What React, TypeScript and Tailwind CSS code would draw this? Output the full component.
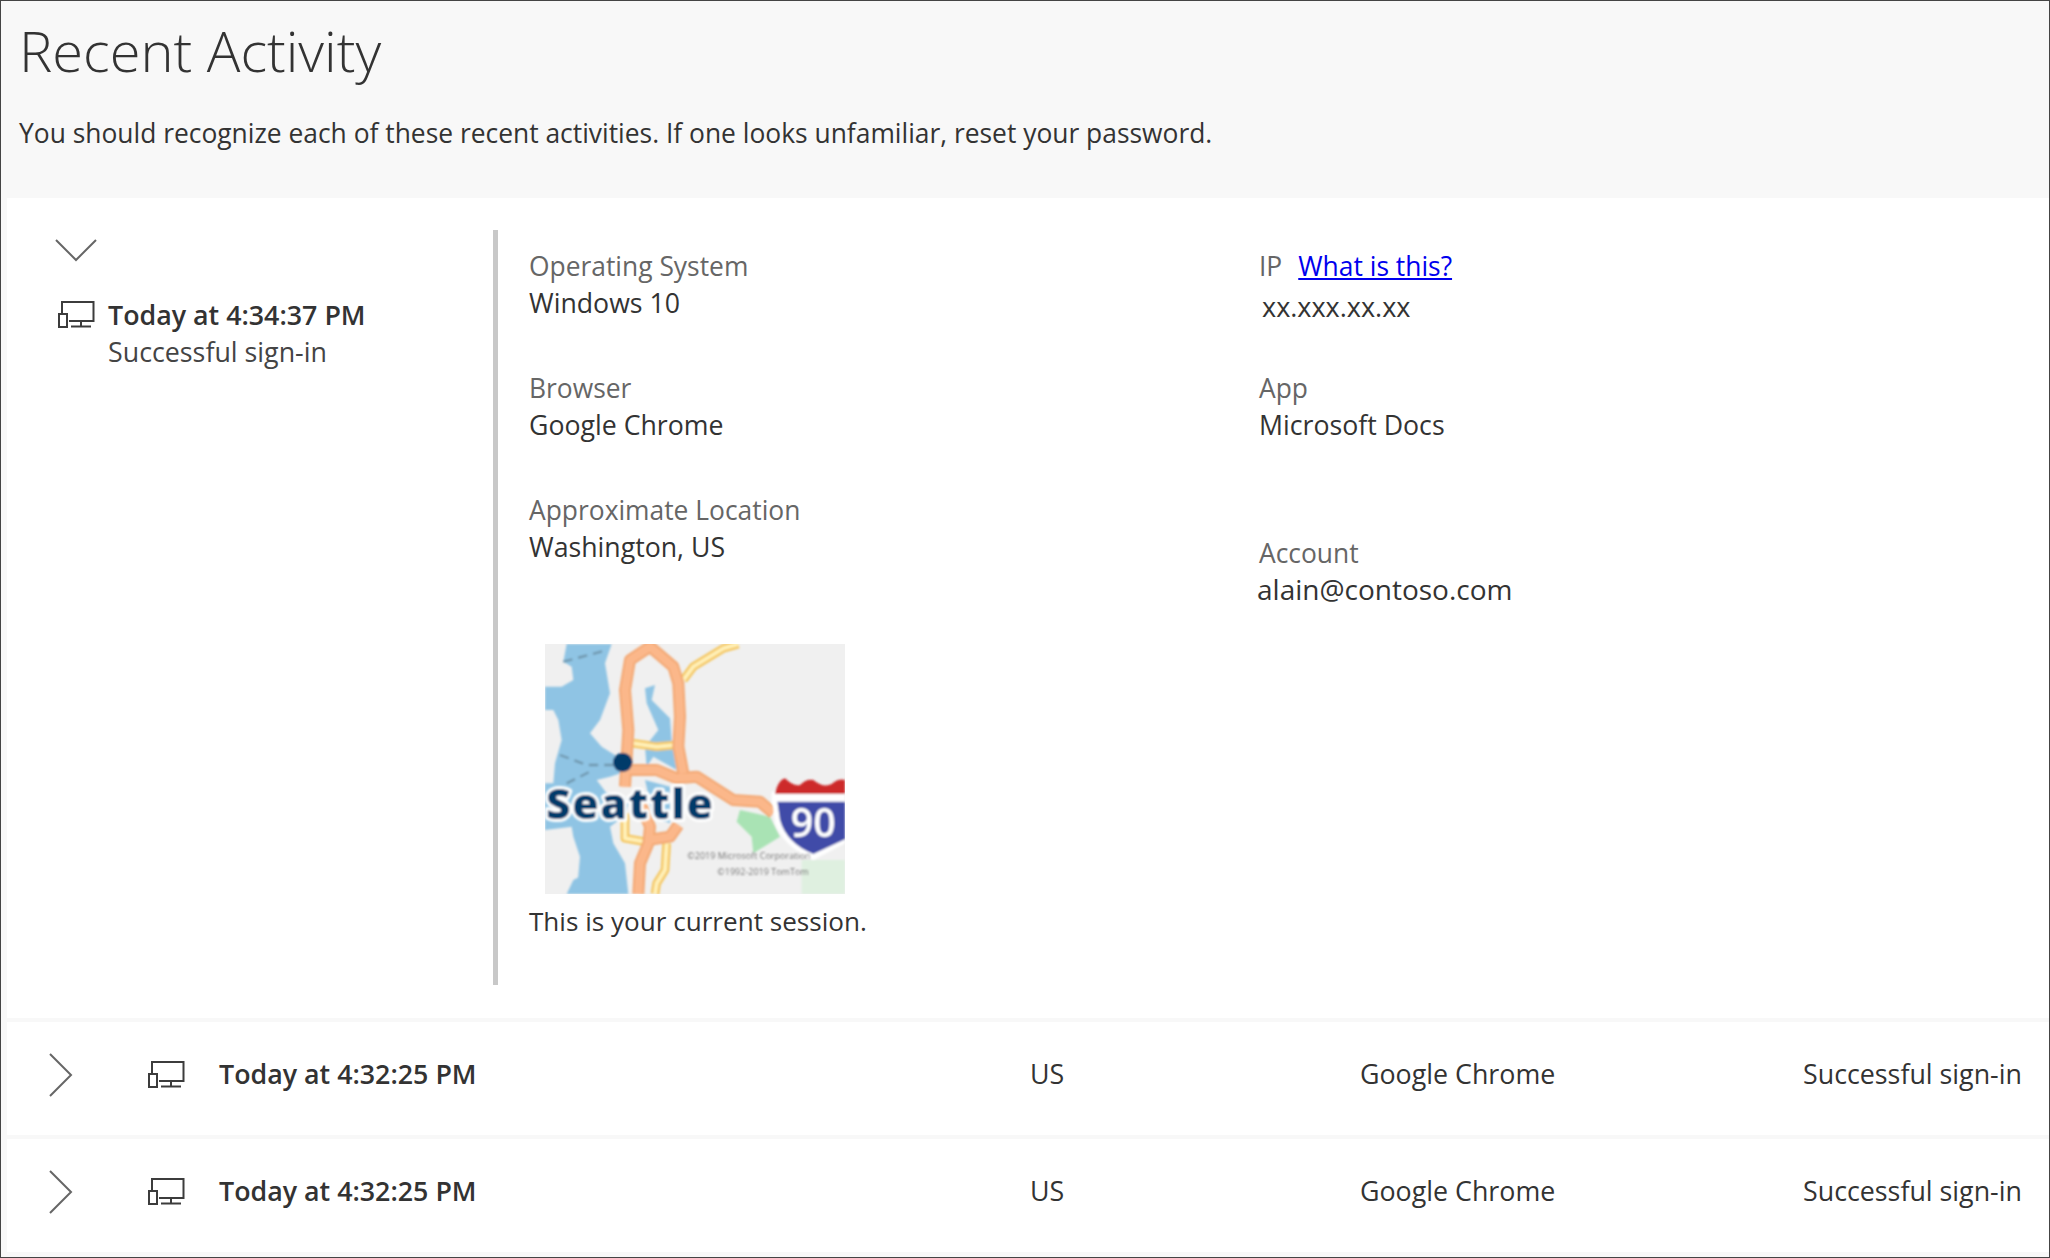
const font = "font-['Open_Sans','Noto_Sans',sans-serif]";

function DeviceIcon() {
  return (
    <svg width="37" height="27" viewBox="0 0 37 27" fill="none" stroke="#3c3c3c" strokeWidth="2" className="shrink-0">
      <path d="M4 14V1h31.500v19H11" />
      <rect x="1" y="13" width="8" height="13" />
      <path d="M23 20v5M13 25.500h20" />
    </svg>
  );
}

function Field({ label, value, className }: { label: string; value: string; className?: string }) {
  return (
    <div className={className}>
      <div className="h-[37px] leading-[37px] text-[#666]">{label}</div>
      <div className="h-[37px] leading-[35px] text-[26.7px] text-[#333]">{value}</div>
    </div>
  );
}

function SeattleMap() {
  return (
    <svg width="300" height="250" viewBox="45 42 900 750" className="block">
      <defs>
        <filter id="soft">
          <feGaussianBlur stdDeviation="2.5" />
        </filter>
      </defs>
      <rect x="45" y="42" width="900" height="750" fill="#f0f0f0" />
      <g filter="url(#soft)">
        <path d="M815 690H945V792H815Z" fill="#dff0e0" />
        <path d="M630 540L720 560L750 620L670 670L665 620L620 575Z" fill="#a9e3b4" />
        <path
          d="M110 42H245L225 100L240 190L210 270L180 310L215 350L270 385L285 425L240 440L200 450L230 490L300 510L280 560L240 590L250 640L285 700L295 792H140L150 680L130 620L125 590L45 600V460H70L75 400L95 330L85 270L70 240L45 240V170H95L130 150L125 110L100 95Z"
          fill="#8fc4e4"
        />
        <path d="M345 175L375 165L365 210L420 265L425 330L440 420L370 380L350 410L345 350L385 300L350 220Z" fill="#8fc4e4" />
        <path d="M345 450L420 470L420 580L370 560Z" fill="#8fc4e4" />
        <path d="M110 792L130 750L170 730L175 760L160 792Z" fill="#8fc4e4" />
        <path d="M100 95L225 62M90 375L170 405L250 405M110 460L190 420" stroke="#6f96ad" strokeWidth="7" strokeDasharray="28 18" fill="none" />
        <g fill="none" strokeLinejoin="round">
          <path d="M460 150L490 110L580 55L625 42M310 340L380 350L435 345M285 550L285 625L345 635M410 640L405 720L380 760L375 792" stroke="#f5c65c" strokeWidth="26" />
          <path d="M460 150L490 110L580 55L625 42M310 340L380 350L435 345M285 550L285 625L345 635M410 640L405 720L380 760L375 792" stroke="#fff0b8" strokeWidth="12" />
          <path d="M285 470L295 300L285 180L300 90L360 50L430 110L445 160L450 260L445 350L460 430M300 420L380 420L440 445L500 440L610 510L690 515L730 550M330 520L360 590L355 640L330 700L325 792M355 630L420 620L445 585" stroke="#f3a873" strokeWidth="36" />
          <path d="M285 470L295 300L285 180L300 90L360 50L430 110L445 160L450 260L445 350L460 430M300 420L380 420L440 445L500 440L610 510L690 515L730 550M330 520L360 590L355 640L330 700L325 792M355 630L420 620L445 585" stroke="#fbb78a" strokeWidth="24" />
        </g>
        <circle cx="278" cy="397" r="29" fill="#003a6b" />
      </g>
      <g filter="url(#soft)">
        <text x="48" y="568" fontFamily="Open Sans" fontWeight="800" fontSize="128" letterSpacing="5" fill="#003a6b" stroke="#fff" strokeWidth="18" paintOrder="stroke" strokeLinejoin="round">
          Seattle
        </text>
        <path d="M725 520V485H945V520Z" fill="#fff" />
        <path d="M735 490Q745 450 765 445Q790 470 810 465Q830 445 850 450Q880 475 905 462Q925 445 945 450V492H735Z" fill="#cd2a2a" />
        <path d="M725 505H945V640L850 690Q760 650 735 580Z" fill="#fff" />
        <path d="M742 515H945V628L850 672Q770 640 750 570Z" fill="#3f4ca8" />
        <text x="782" y="620" fontFamily="Open Sans" fontWeight="600" fontSize="118" fill="#fff">90</text>
        <g fontFamily="Open Sans" fontSize="27" fill="#777">
          <text x="472" y="688">©2019 Microsoft Corporation</text>
          <text x="562" y="736">©1992-2019 TomTom</text>
        </g>
      </g>
    </svg>
  );
}

function ActivityRow({ time }: { time: string }) {
  return (
    <div className="h-[113px] shrink-0 bg-white flex items-center pb-[8px] text-[26.8px]">
      <svg width="24" height="44" viewBox="0 0 24 44" fill="none" stroke="#666" strokeWidth="2" className="ml-[42px] shrink-0">
        <path d="M1 1l21 21L1 43" />
      </svg>
      <div className="ml-[75px]">
        <DeviceIcon />
      </div>
      <div className="ml-[34px] w-[811px] font-semibold text-[#333]">{time}</div>
      <div className="w-[330px] text-[#333]">US</div>
      <div className="w-[443px] text-[#333]">Google Chrome</div>
      <div className="w-[218px] whitespace-nowrap text-[#333]">Successful sign-in</div>
    </div>
  );
}

export default function App() {
  return (
    <div className={`${font} w-[2050px] h-[1258px] overflow-hidden bg-[#f8f8f8] border border-[#444] text-[26.4px] flex flex-col`}>
      <header className="h-[197px] shrink-0 pl-[18px]">
        <h1 className="pt-[16px] text-[56px] leading-[66px] font-light text-[#333]">Recent Activity</h1>
        <p className="mt-[32px] leading-[36px] text-[#333]">
          You should recognize each of these recent activities. If one looks unfamiliar, reset your password.
        </p>
      </header>
      <section className="ml-[6px] h-[820px] shrink-0 bg-white flex pt-[32px]">
        <div className="w-[491px] shrink-0 h-[755px] border-r-[5px] border-[#c8c8c8]">
          <svg width="42" height="24" viewBox="0 0 42 24" fill="none" stroke="#666" strokeWidth="2" className="ml-[48px] mt-[9px]">
            <path d="M1 1l20 20L41 1" />
          </svg>
          <div className="mt-[33px] ml-[51px] flex">
            <div className="mt-[5px]">
              <DeviceIcon />
            </div>
            <div className="ml-[13px] text-[26.8px]">
              <div className="h-[37px] leading-[37px] font-semibold text-[#333]">Today at 4:34:37 PM</div>
              <div className="h-[37px] leading-[37px] text-[#444]">Successful sign-in</div>
            </div>
          </div>
        </div>
        <div className="flex-1 flex pt-[18px]">
          <div className="ml-[31px] w-[730px] shrink-0">
            <Field label="Operating System" value="Windows 10" />
            <Field label="Browser" value="Google Chrome" className="mt-[48px]" />
            <Field label="Approximate Location" value="Washington, US" className="mt-[48px]" />
            <div className="ml-[16px] mt-[78px]">
              <SeattleMap />
            </div>
            <div className="mt-[9px] h-[37px] leading-[37px] text-[26.1px] text-[#333]">This is your current session.</div>
          </div>
          <div className="flex-1">
            <div className="h-[37px] leading-[37px] text-[#666]">
              IP
              <a href="#" className="ml-[16px] text-[#0000ee] underline">What is this?</a>
            </div>
            <div className="ml-[3px] mt-[3px] mb-[1px] h-[37px] leading-[37px] text-[27px] text-[#333]">xx.xxx.xx.xx</div>
            <Field label="App" value="Microsoft Docs" className="mt-[45px]" />
            <div className="mt-[91px]">
              <div className="h-[37px] leading-[37px] text-[#666]">Account</div>
              <div className="-ml-[2px] h-[37px] leading-[35px] text-[28px] text-[#333]">alain@contoso.com</div>
            </div>
          </div>
        </div>
      </section>
      <div className="ml-[6px] mt-[4px] flex flex-col gap-[4px]">
        <ActivityRow time="Today at 4:32:25 PM" />
        <ActivityRow time="Today at 4:32:25 PM" />
      </div>
    </div>
  );
}
